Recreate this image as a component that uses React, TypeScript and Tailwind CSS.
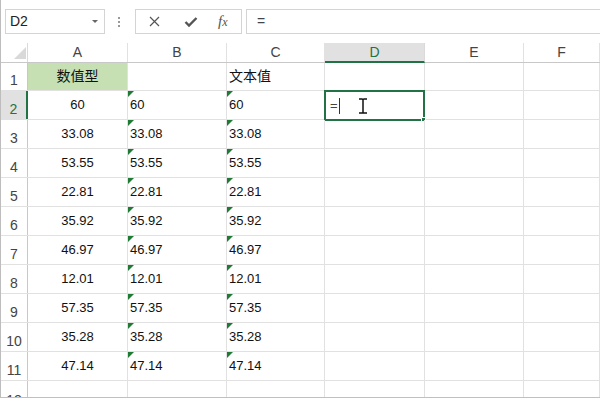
import React from 'react';

const cols = ['A', 'B', 'C', 'D', 'E', 'F'];
const colW = ['w-[100px]', 'w-[99px]', 'w-[98px]', 'w-[100px]', 'w-[99px]', 'flex-1'];

const values = ['60', '33.08', '53.55', '22.81', '35.92', '46.97', '12.01', '57.35', '35.28', '47.14'];

const font = { fontFamily: '"Liberation Sans", "Noto Sans CJK SC", sans-serif' };

function Tri() {
  return <span className="absolute left-0 top-0 w-0 h-0 border-t-[6px] border-t-[#1f7a34] border-r-[6px] border-r-transparent" />;
}

function Toolbar() {
  return (
    <div className="h-[43px] flex items-start pt-[9px] pl-[4px]">
      <div className="w-[100px] h-[25px] border border-[#d4d4d4] flex items-center pl-[4px] pr-[6px] text-[14px] text-[#222]">
        <span className="flex-1">D2</span>
        <span className="w-0 h-0 border-l-[3px] border-r-[3px] border-t-[3px] border-l-transparent border-r-transparent border-t-[#666]" />
      </div>
      <div className="w-[28px] h-[25px] flex flex-col items-center justify-center gap-[2px]">
        <span className="w-[2px] h-[2px] bg-[#999]" />
        <span className="w-[2px] h-[2px] bg-[#999]" />
        <span className="w-[2px] h-[2px] bg-[#999]" />
      </div>
      <div className="ml-[2px] w-[107px] h-[25px] border border-[#d4d4d4] flex items-center pl-[13px] text-[#555]">
        <svg width="11" height="11" viewBox="0 0 11 11">
          <path d="M1 1 L10 10 M10 1 L1 10" stroke="#555" strokeWidth="1.2" />
        </svg>
        <svg className="ml-[24px]" width="14" height="12" viewBox="0 0 14 12">
          <path d="M1.5 6 L5 9.5 L12.5 2" stroke="#555" strokeWidth="2.4" fill="none" />
        </svg>
        <span className="ml-[20px] text-[15px] italic leading-none" style={{ fontFamily: '"Liberation Serif", serif' }}>
          f<span className="text-[12px]">x</span>
        </span>
      </div>
      <div className="ml-[4px] flex-1 h-[25px] border border-r-0 border-[#d4d4d4] flex items-center pl-[10px] text-[14px] text-[#444]">
        =
      </div>
    </div>
  );
}

function HeaderRow() {
  return (
    <div className="flex h-[20px] border-b border-[#c8c8c8]">
      <div className="relative w-[27px] border-r border-[#dadada]">
        <span className="absolute right-[1px] bottom-[3px] w-0 h-0 border-l-[12px] border-l-transparent border-b-[12px] border-b-[#d9d9d9]" />
      </div>
      {cols.map((c, i) =>
        c === 'D' ? (
          <div key={c} className={`${colW[i]} h-[20px] -mb-px bg-[#e1e1e1] border-b-2 border-[#217346] border-r border-r-[#dadada] flex items-center justify-center text-[14px] text-[#217346]`}>
            {c}
          </div>
        ) : (
          <div key={c} className={`${colW[i]} border-r border-[#e1e1e1] flex items-center justify-center text-[14px] text-[#444]`}>
            {c}
          </div>
        )
      )}
    </div>
  );
}

function RowHead({ n, active }: { n: number; active?: boolean }) {
  return (
    <div
      className={`w-[27px] flex items-end justify-center pb-[3px] leading-none text-[14px] ${
        active ? 'bg-[#e1e1e1] text-[#217346] border-r-2 border-[#217346]' : 'text-[#444] border-r border-[#c8c8c8]'
      }`}
    >
      {n}
    </div>
  );
}

function Cell({ w, children, className = '' }: { w: string; children?: React.ReactNode; className?: string }) {
  return <div className={`${w} relative border-r border-[#e1e1e1] flex items-center text-[13px] text-[#111] ${className}`}>{children}</div>;
}

export default function App() {
  return (
    <div className="w-[600px] h-[398px] overflow-hidden bg-white border-l border-[#bdbdbd] border-b border-b-[#c0c0c0]" style={font}>
      <Toolbar />
      <HeaderRow />
      <div className="flex h-[28px] border-b border-[#e1e1e1]">
        <RowHead n={1} />
        <Cell w={colW[0]} className="bg-[#c6e0b4] justify-center text-[14px]">数值型</Cell>
        <Cell w={colW[1]} />
        <Cell w={colW[2]} className="pl-[2px] text-[14px]">文本值</Cell>
        <Cell w={colW[3]} />
        <Cell w={colW[4]} />
        <Cell w={colW[5]} />
      </div>
      {values.map((v, idx) => {
        const r = idx + 2;
        const sel = r === 2;
        return (
          <div key={r} className="flex h-[29px] border-b border-[#e1e1e1]">
            <RowHead n={r} active={sel} />
            <Cell w={colW[0]} className="justify-center">{v}</Cell>
            <Cell w={colW[1]} className="pl-[2px]">
              <Tri />
              {v}
            </Cell>
            <Cell w={colW[2]} className="pl-[2px]">
              <Tri />
              {v}
            </Cell>
            <Cell w={colW[3]}>
              {sel && (
                <div className="absolute -left-px -top-px w-[101px] h-[31px] border-2 border-[#217346] flex items-center pl-[4px] text-[13px] text-[#444]">
                  <span>=</span>
                  <span className="ml-[1px] w-px h-[16px] bg-[#333]" />
                  <svg className="ml-[18px]" width="10" height="16" viewBox="0 0 10 16">
                    <path d="M1 1 H4 Q5 1 5 2 V14 Q5 15 4 15 H1 M9 1 H6 Q5 1 5 2 M5 14 Q5 15 6 15 H9" stroke="#111" strokeWidth="1.5" fill="none" />
                  </svg>
                  <span className="absolute -right-[3px] -bottom-[3px] w-[5px] h-[5px] bg-[#217346] border border-white" />
                </div>
              )}
            </Cell>
            <Cell w={colW[4]} />
            <Cell w={colW[5]} />
          </div>
        );
      })}
      <div className="flex h-[29px]">
        <RowHead n={12} />
        <Cell w={colW[0]} />
        <Cell w={colW[1]} />
        <Cell w={colW[2]} />
        <Cell w={colW[3]} />
        <Cell w={colW[4]} />
        <Cell w={colW[5]} />
      </div>
    </div>
  );
}
